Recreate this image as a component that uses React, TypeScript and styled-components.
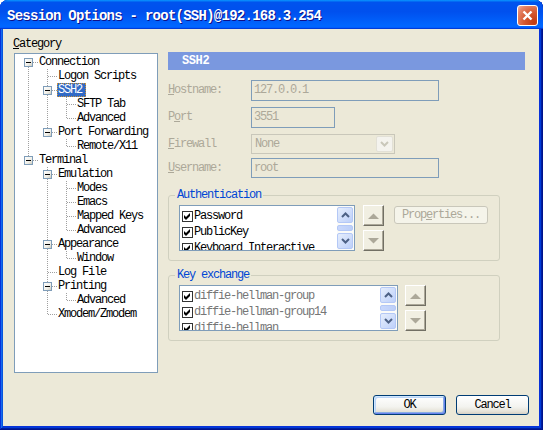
import React from 'react';
import styled, { createGlobalStyle } from 'styled-components';

const MONO = `'Liberation Mono', 'DejaVu Sans Mono', monospace`;

interface TreeNode {
    label: string;
    selected?: boolean;
    children?: TreeNode[];
}

interface TreeRowData {
    label: string;
    selected?: boolean;
    guides: boolean[];
    top: boolean;
    bottom: boolean;
    expandable: boolean;
}

const categories: TreeNode[] = [
    {
        label: 'Connection',
        children: [
            { label: 'Logon Scripts' },
            { label: 'SSH2', selected: true, children: [{ label: 'SFTP Tab' }, { label: 'Advanced' }] },
            { label: 'Port Forwarding', children: [{ label: 'Remote/X11' }] },
        ],
    },
    {
        label: 'Terminal',
        children: [
            {
                label: 'Emulation',
                children: [{ label: 'Modes' }, { label: 'Emacs' }, { label: 'Mapped Keys' }, { label: 'Advanced' }],
            },
            { label: 'Appearance', children: [{ label: 'Window' }] },
            { label: 'Log File' },
            { label: 'Printing', children: [{ label: 'Advanced' }] },
            { label: 'Xmodem/Zmodem' },
        ],
    },
];

// walk the tree, remembering for every ancestor level whether its line keeps going
const flatten = (nodes: TreeNode[], guides: boolean[] = [], rows: TreeRowData[] = []) => {
    nodes.forEach((n, i) => {
        const last = i === nodes.length - 1;
        rows.push({
            label: n.label,
            selected: n.selected,
            guides,
            top: guides.length > 0 || i > 0,
            bottom: !last,
            expandable: !!n.children,
        });
        if (n.children) flatten(n.children, [...guides, !last], rows);
    });
    return rows;
};

const authMethods = ['Password', 'PublicKey', 'Keyboard Interactive'];
const kexMethods = ['diffie-hellman-group', 'diffie-hellman-group14', 'diffie-hellman'];

const Connector: React.FC<{ top: boolean; bottom: boolean; box: boolean }> = ({ top, bottom, box }) => (
    <ConnectorSvg width="19" height="14" viewBox="0 0 19 14" shapeRendering="crispEdges">
        <defs>
            <linearGradient id="tv-box" x1="0" y1="0" x2="1" y2="1">
                <stop offset="0" stopColor="#FFFFFF" />
                <stop offset="0.6" stopColor="#F0EFE8" />
                <stop offset="1" stopColor="#C6C3B4" />
            </linearGradient>
        </defs>
        {top && <line x1="9.5" y1="0" x2="9.5" y2="7" stroke="#A0A0A0" strokeDasharray="1 1" />}
        {bottom && <line x1="9.5" y1="8" x2="9.5" y2="14" stroke="#A0A0A0" strokeDasharray="1 1" />}
        <line x1="10" y1="7.5" x2="19" y2="7.5" stroke="#A0A0A0" strokeDasharray="1 1" />
        {box && (
            <>
                <rect x="5.5" y="3.5" width="8" height="8" fill="url(#tv-box)" stroke="#7F9DB9" />
                <line x1="7" y1="7.5" x2="12" y2="7.5" stroke="#000" />
            </>
        )}
    </ConnectorSvg>
);

const Chevron: React.FC<{ up?: boolean; color?: string }> = ({ up, color = '#4D6185' }) => (
    <svg width="9" height="6" viewBox="0 0 9 6">
        <path
            d={up ? 'M1 5 L4.5 1.5 L8 5' : 'M1 1 L4.5 4.5 L8 1'}
            fill="none"
            stroke={color}
            strokeWidth="2"
        />
    </svg>
);

const Triangle: React.FC<{ up?: boolean }> = ({ up }) => (
    <svg width="11" height="6" viewBox="0 0 11 6">
        <path d={up ? 'M0 6 L11 6 L5.5 0.5 Z' : 'M0 0 L11 0 L5.5 5.5 Z'} fill="#ACA899" />
    </svg>
);

const CheckMark = () => (
    <svg width="9" height="9" viewBox="0 0 9 9">
        <path d="M1 3 L3 5 L7 1 L7 4 L3 8 L1 6 Z" fill="#000" />
    </svg>
);

const ScrollBar = () => (
    <Scroll>
        <ScrollButton>
            <Chevron up />
        </ScrollButton>
        <ScrollThumb />
        <ScrollButton>
            <Chevron />
        </ScrollButton>
    </Scroll>
);

const CheckList: React.FC<{ items: string[]; width: number; muted?: boolean }> = ({ items, width, muted }) => (
    <ListBox $w={width}>
        <ListItems>
            {items.map((item) => (
                <ListItem key={item} $muted={muted}>
                    <CheckBox>
                        <CheckMark />
                    </CheckBox>
                    {item}
                </ListItem>
            ))}
        </ListItems>
        <ScrollBar />
    </ListBox>
);

const MoveButtons = () => (
    <MoveColumn>
        <MoveButton>
            <Triangle up />
        </MoveButton>
        <MoveButton>
            <Triangle />
        </MoveButton>
    </MoveColumn>
);

const App: React.FC = () => {
    const rows = flatten(categories);

    const renderTitleBar = (
        <TitleBar>
            <Title>Session Options - root(SSH)@192.168.3.254</Title>
            <CloseButton>
                <svg width="13" height="13" viewBox="0 0 13 13">
                    <path d="M2.5 2.5 L10.5 10.5 M10.5 2.5 L2.5 10.5" stroke="#fff" strokeWidth="2.4" />
                </svg>
            </CloseButton>
        </TitleBar>
    );

    const renderCategory = (
        <CategoryColumn>
            <SectionLabel>
                <u>C</u>ategory
            </SectionLabel>
            <TreeBox>
                {rows.map((r, i) => (
                    <TreeRow key={i}>
                        {r.guides.map((g, j) => (
                            <Guide key={j} $line={g} />
                        ))}
                        <Connector top={r.top} bottom={r.bottom} box={r.expandable} />
                        <NodeLabel $selected={r.selected}>{r.label}</NodeLabel>
                    </TreeRow>
                ))}
            </TreeBox>
        </CategoryColumn>
    );

    const renderForm = (
        <Form>
            <FormRow $h={27}>
                <FieldLabel>
                    <u>H</u>ostname:
                </FieldLabel>
                <TextField $w={188} $h={21}>127.0.0.1</TextField>
            </FormRow>
            <FormRow $h={27}>
                <FieldLabel>
                    P<u>o</u>rt
                </FieldLabel>
                <TextField $w={84} $h={21}>3551</TextField>
            </FormRow>
            <FormRow $h={24}>
                <FieldLabel>
                    <u>F</u>irewall
                </FieldLabel>
                <Select>
                    <SelectText>None</SelectText>
                    <SelectButton>
                        <Chevron color="#C9C7BA" />
                    </SelectButton>
                </Select>
            </FormRow>
            <FormRow $h={20}>
                <FieldLabel>
                    <u>U</u>sername:
                </FieldLabel>
                <TextField $w={188} $h={20}>root</TextField>
            </FormRow>
        </Form>
    );

    const renderAuth = (
        <GroupBox $mt={10}>
            <GroupTitle>Authentication</GroupTitle>
            <GroupBody>
                <CheckList items={authMethods} width={176} />
                <Spacer $w={8} />
                <MoveButtons />
                <Spacer $w={10} />
                <PlainButton>
                    Prop<u>e</u>rties...
                </PlainButton>
            </GroupBody>
        </GroupBox>
    );

    const renderKex = (
        <GroupBox $mt={7}>
            <GroupTitle>Key exchange</GroupTitle>
            <GroupBody>
                <CheckList items={kexMethods} width={219} muted />
                <Spacer $w={7} />
                <MoveButtons />
            </GroupBody>
        </GroupBox>
    );

    return (
        <>
            <GlobalStyle />
            <Window>
                {renderTitleBar}
                <Client>
                    <Main>
                        {renderCategory}
                        <Panel>
                            <PanelHeader>SSH2</PanelHeader>
                            {renderForm}
                            {renderAuth}
                            {renderKex}
                        </Panel>
                    </Main>
                    <Footer>
                        <DialogButton $default>OK</DialogButton>
                        <DialogButton>Cancel</DialogButton>
                    </Footer>
                </Client>
            </Window>
        </>
    );
};

export default App;

const GlobalStyle = createGlobalStyle`
    html, body {
        margin: 0;
        padding: 0;
        background: #ffffff;
    }
    body {
        font-family: ${MONO};
        font-size: 12px;
        letter-spacing: -1.2px;
    }
`;

const Window = styled.div`
    width: 543px;
    height: 430px;
    box-sizing: border-box;
    display: flex;
    flex-direction: column;
    border-radius: 8px 8px 0 0;
    overflow: hidden;
    background: #0831d9;
    box-shadow: inset -1px -1px #00138c, inset 1px 1px #0831d9, inset -2px -2px #001ea0,
        inset 2px 2px #166aee, inset -3px -3px #003bda, inset 3px 3px #0855dd;
`;

const TitleBar = styled.div`
    height: 29px;
    flex: none;
    display: flex;
    align-items: center;
    justify-content: space-between;
    padding: 2px 5px 0 7px;
    box-sizing: border-box;
    background: linear-gradient(
        to bottom,
        #0997ff 0%,
        #0053ee 8%,
        #0050ee 40%,
        #0066ff 88%,
        #0066ff 93%,
        #005bff 95%,
        #003dd7 96%,
        #003dd7 100%
    );
`;

const Title = styled.span`
    font-family: ${MONO};
    font-size: 14px;
    font-weight: bold;
    letter-spacing: -0.74px;
    color: #ffffff;
    text-shadow: 1px 1px #0f1089;
    white-space: nowrap;
`;

const CloseButton = styled.div`
    width: 21px;
    height: 21px;
    box-sizing: border-box;
    border: 1px solid #ffffff;
    border-radius: 3px;
    display: flex;
    align-items: center;
    justify-content: center;
    background: radial-gradient(circle at 85% 85%, #c13a11 0%, #d65a32 45%, #e5866a 80%, #f2b7a4 100%);
`;

const Client = styled.div`
    flex: 1;
    margin: 0 4px 4px 3px;
    padding: 8px 10px 11px 11px;
    display: flex;
    flex-direction: column;
    background: #ece9d8;
    color: #000000;
`;

const Main = styled.div`
    display: grid;
    grid-template-columns: 144px 357px;
    column-gap: 10px;
    align-items: start;
`;

const CategoryColumn = styled.div`
    display: flex;
    flex-direction: column;
    gap: 2px;
`;

const SectionLabel = styled.div`
    height: 14px;
    line-height: 14px;
    margin-left: -1px;
`;

const TreeBox = styled.div`
    width: 144px;
    height: 320px;
    box-sizing: border-box;
    border: 1px solid #7f9db9;
    background: #ffffff;
    padding-top: 1px;
`;

const TreeRow = styled.div`
    display: flex;
    height: 14px;
    padding-left: 4px;
`;

const Guide = styled.span<{ $line: boolean }>`
    width: 19px;
    height: 14px;
    flex: none;
    background-image: ${(p) =>
        p.$line ? 'linear-gradient(to bottom, #A0A0A0 50%, transparent 50%)' : 'none'};
    background-size: 1px 2px;
    background-repeat: repeat-y;
    background-position: 9px 0;
`;

const ConnectorSvg = styled.svg`
    display: block;
    flex: none;
`;

const NodeLabel = styled.span<{ $selected?: boolean }>`
    height: 14px;
    line-height: 14px;
    padding: 0 4px 0 1px;
    white-space: nowrap;
    color: ${(p) => (p.$selected ? '#ffffff' : '#000000')};
    background: ${(p) => (p.$selected ? '#316AC5' : 'transparent')};
    outline: ${(p) => (p.$selected ? '1px dotted #CE953A' : 'none')};
    outline-offset: -1px;
`;

const Panel = styled.div`
    padding-top: 15px;
    display: flex;
    flex-direction: column;
`;

const PanelHeader = styled.div`
    height: 18px;
    line-height: 18px;
    padding-left: 14px;
    background: #7a98df;
    color: #ffffff;
    font-weight: bold;
    letter-spacing: -0.4px;
`;

const Form = styled.div`
    margin-top: 10px;
    display: flex;
    flex-direction: column;
`;

const FormRow = styled.div<{ $h: number }>`
    display: grid;
    grid-template-columns: 83px auto;
    align-items: start;
    justify-items: start;
    height: ${(p) => p.$h}px;
`;

const FieldLabel = styled.span`
    line-height: 21px;
    color: #aca899;
    white-space: nowrap;
`;

const TextField = styled.div<{ $w: number; $h: number }>`
    width: ${(p) => p.$w}px;
    height: ${(p) => p.$h}px;
    line-height: ${(p) => p.$h - 2}px;
    box-sizing: border-box;
    border: 1px solid #7f9db9;
    padding-left: 2px;
    color: #aca899;
    background: #ece9d8;
`;

const Select = styled.div`
    width: 144px;
    height: 20px;
    box-sizing: border-box;
    border: 1px solid #c9c7ba;
    display: flex;
    align-items: stretch;
    background: #ece9d8;
`;

const SelectText = styled.span`
    flex: 1;
    line-height: 18px;
    padding-left: 3px;
    color: #aca899;
`;

const SelectButton = styled.span`
    width: 17px;
    margin: 1px;
    box-sizing: border-box;
    border: 1px solid #e2e0d6;
    border-radius: 2px;
    background: #f4f3ee;
    display: flex;
    align-items: center;
    justify-content: center;
`;

const GroupBox = styled.fieldset<{ $mt: number }>`
    width: 332px;
    box-sizing: border-box;
    min-inline-size: 0;
    margin: ${(p) => p.$mt}px 0 0;
    padding: 3px 8px 9px 10px;
    border: 1px solid #d0d0bf;
    border-radius: 3px;
`;

const GroupTitle = styled.legend`
    margin-left: -4px;
    padding: 0 2px;
    line-height: 14px;
    color: #0046d5;
`;

const GroupBody = styled.div`
    display: flex;
    align-items: flex-start;
`;

const Spacer = styled.span<{ $w: number }>`
    width: ${(p) => p.$w}px;
    flex: none;
`;

const ListBox = styled.div<{ $w: number }>`
    width: ${(p) => p.$w}px;
    height: 46px;
    box-sizing: border-box;
    border: 1px solid #7f9db9;
    background: #ffffff;
    display: flex;
    overflow: hidden;
`;

const ListItems = styled.div`
    flex: 1;
    padding-top: 2px;
    overflow: hidden;
`;

const ListItem = styled.div<{ $muted?: boolean }>`
    height: 16px;
    display: flex;
    align-items: center;
    gap: 1px;
    padding-left: 2px;
    white-space: nowrap;
    color: ${(p) => (p.$muted ? '#767676' : '#000000')};
`;

const CheckBox = styled.span`
    width: 11px;
    height: 11px;
    flex: none;
    box-sizing: border-box;
    border: 1px solid #333333;
    background: #ffffff;
    display: flex;
    align-items: center;
    justify-content: center;
`;

const Scroll = styled.div`
    width: 17px;
    flex: none;
    box-sizing: border-box;
    padding: 1px 1px 1px 0;
    display: flex;
    flex-direction: column;
    gap: 1px;
    background: #fbfbf8;
`;

const ScrollButton = styled.div`
    height: 16px;
    flex: none;
    box-sizing: border-box;
    border: 1px solid #b4c8f6;
    border-radius: 2px;
    background: linear-gradient(to bottom right, #e6eefc, #bdd0fa);
    display: flex;
    align-items: center;
    justify-content: center;
`;

const ScrollThumb = styled.div`
    flex: 1;
    margin: 1px 0;
    border: 1px solid #b4c8f6;
    border-radius: 2px;
    background: linear-gradient(to right, #c9d8fc, #bccff8);
`;

const MoveColumn = styled.div`
    display: flex;
    flex-direction: column;
    gap: 4px;
`;

const MoveButton = styled.div`
    width: 21px;
    height: 21px;
    box-sizing: border-box;
    border: 1px solid;
    border-color: #ffffff #716f64 #716f64 #ffffff;
    box-shadow: inset -1px -1px #aca899;
    background: #f1efe2;
    display: flex;
    align-items: center;
    justify-content: center;
`;

const PlainButton = styled.div`
    width: 94px;
    height: 18px;
    margin-top: 1px;
    box-sizing: border-box;
    border: 1px solid #c9c7ba;
    border-radius: 3px;
    background: #f5f4ea;
    color: #aca899;
    line-height: 16px;
    text-align: center;
`;

const Footer = styled.div`
    margin-top: auto;
    display: flex;
    justify-content: flex-end;
    gap: 10px;
`;

const DialogButton = styled.div<{ $default?: boolean }>`
    width: 73px;
    height: 20px;
    box-sizing: border-box;
    border: 1px solid #003c74;
    border-radius: 3px;
    line-height: 18px;
    text-align: center;
    background: linear-gradient(to bottom, #ffffff 0%, #f3f3ef 60%, #e6e3d8 85%, #d6d0c5 100%);
    box-shadow: ${(p) =>
        p.$default
            ? 'inset -1px -1px #6982EE, inset 1px 1px #CEE7FF, inset -2px -2px #89ADE4, inset 2px 2px #BCD4F6'
            : 'none'};
`;
